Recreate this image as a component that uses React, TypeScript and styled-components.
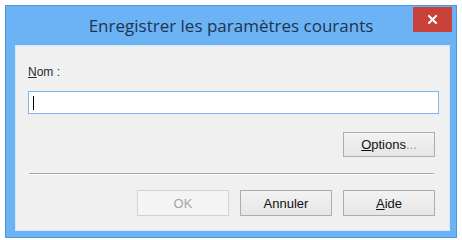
import styled, { createGlobalStyle } from "styled-components";

const GlobalStyle = createGlobalStyle`
  html, body {
    margin: 0;
    padding: 0;
    background: #ffffff;
  }
  body {
    font-family: "Liberation Sans", Arial, sans-serif;
  }
`;

const Page = styled.div`
  padding: 5px;
  width: 462px;
  height: 240px;
  box-sizing: border-box;
`;

const Window = styled.div`
  width: 452px;
  height: 233px;
  box-sizing: border-box;
  background: #6cb3f6;
  border: 1px solid #4f97dc;
  display: flex;
  flex-direction: column;
`;

const TitleBar = styled.div`
  height: 39px;
  display: grid;
  grid-template-columns: 48px 1fr 48px;
  align-items: center;
`;

const Title = styled.div`
  grid-column: 2;
  text-align: center;
  font-family: "Open Sans", "Noto Sans", sans-serif;
  font-size: 17px;
  color: #1b3550;
  white-space: nowrap;
  margin-top: 0;
`;

const CloseButton = styled.div`
  grid-column: 3;
  justify-self: end;
  align-self: start;
  margin-top: 1px;
  margin-right: 4px;
  width: 39px;
  height: 25px;
  background: #c8423b;
  display: flex;
  align-items: center;
  justify-content: center;
`;

const Client = styled.div`
  flex: 1;
  margin: 0 6px 6px 9px;
  background: #f0f0f0;
  border: 1px solid #d6e6f6;
  display: flex;
  flex-direction: column;
  padding: 19px 10px 14px 12px;
`;

const Label = styled.div`
  font-size: 12px;
  line-height: 14px;
  color: #2a2a2a;
  u {
    text-decoration: underline;
  }
`;

const NameInput = styled.div`
  margin-top: 12px;
  height: 23px;
  box-sizing: border-box;
  background: #ffffff;
  border: 1px solid #7fb5e8;
  display: flex;
  align-items: center;
  padding-left: 4px;
`;

const Caret = styled.div`
  width: 1px;
  height: 14px;
  background: #000000;
`;

const Row = styled.div<{ $top: number }>`
  margin-top: ${(p) => p.$top}px;
  display: flex;
  justify-content: flex-end;
  gap: 11px;
  padding-right: 4px;
`;

const Button = styled.div<{ $disabled?: boolean; $height?: number }>`
  width: 92px;
  height: ${(p) => p.$height ?? 26}px;
  box-sizing: border-box;
  border: 1px solid ${(p) => (p.$disabled ? "#d2d2d2" : "#adadad")};
  background: ${(p) =>
    p.$disabled ? "#f4f4f4" : "linear-gradient(#f2f2f2, #e6e6e6)"};
  color: ${(p) => (p.$disabled ? "#a3a3a3" : "#111111")};
  font-size: 13px;
  display: flex;
  align-items: center;
  justify-content: center;
  u {
    text-decoration: underline;
  }
`;

const Dots = styled.span`
  color: #9a9a9a;
`;

const Separator = styled.div`
  margin: 16px 5px 0 1px;
  height: 1px;
  background: #a8a8a8;
  box-shadow: 0 1px 0 #ffffff;
`;

export default function App() {
  return (
    <Page>
      <GlobalStyle />
      <Window>
        <TitleBar>
          <Title>Enregistrer les paramètres courants</Title>
          <CloseButton>
            <svg width="9" height="9" viewBox="0 0 9 9">
              <path
                d="M1 1 L8 8 M8 1 L1 8"
                stroke="#ffffff"
                strokeWidth="2"
                strokeLinecap="square"
              />
            </svg>
          </CloseButton>
        </TitleBar>
        <Client>
          <Label>
            <u>N</u>om :
          </Label>
          <NameInput>
            <Caret />
          </NameInput>
          <Row $top={18}>
            <Button $height={25}>
              <span>
                <u>O</u>ptions<Dots>...</Dots>
              </span>
            </Button>
          </Row>
          <Separator />
          <Row $top={16}>
            <Button $disabled>OK</Button>
            <Button>Annuler</Button>
            <Button>
              <span>
                <u>A</u>ide
              </span>
            </Button>
          </Row>
        </Client>
      </Window>
    </Page>
  );
}
